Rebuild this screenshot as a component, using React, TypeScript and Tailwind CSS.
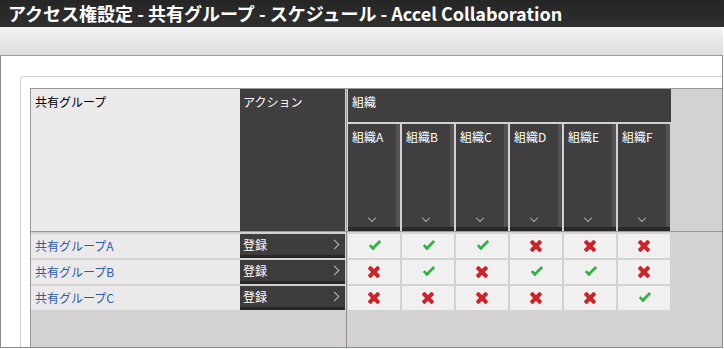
import React from 'react'

const orgs = ['組織A', '組織B', '組織C', '組織D', '組織E', '組織F']

const groups = [
  { name: '共有グループA', perms: [1, 1, 1, 0, 0, 0] },
  { name: '共有グループB', perms: [0, 1, 0, 1, 1, 0] },
  { name: '共有グループC', perms: [0, 0, 0, 0, 0, 1] },
]

// css-drawn icons (no svg)
function CheckIcon() {
  return <div className="w-[6px] h-[12px] -mt-[4px] ml-[2px] border-r-[3px] border-b-[3px] border-[#33b143] rounded-br-[1px] rotate-45" />
}

function CrossIcon() {
  return (
    <div className="grid place-items-center">
      <div className="col-start-1 row-start-1 w-[14px] h-[4px] rounded-[1px] bg-[#c8262c] rotate-45" />
      <div className="col-start-1 row-start-1 w-[14px] h-[4px] rounded-[1px] bg-[#c8262c] -rotate-45" />
    </div>
  )
}

function ChevronDown() {
  return <div className="w-[6px] h-[6px] border-r-[1.5px] border-b-[1.5px] border-[#a9a9a9] rotate-45" />
}

function ChevronRight() {
  return <div className="w-[7px] h-[7px] border-r-[1.5px] border-t-[1.5px] border-[#bdbdbd] rotate-45" />
}

export default function App() {
  return (
    <div className="w-[724px] h-[349px] bg-white overflow-hidden flex flex-col font-['Noto_Sans_CJK_JP','Noto_Sans',sans-serif]">
      <div className="h-[27px] shrink-0 bg-gradient-to-b from-[#262626] to-[#2f2f2f] pl-[8px] text-white font-bold text-[18px] leading-[27px] whitespace-nowrap">
        アクセス権設定 - 共有グループ - スケジュール - Accel Collaboration
      </div>
      <div className="h-[29px] shrink-0 w-[723px] bg-gradient-to-b from-[#f4f4f4] to-[#dcdcdc] border-b border-[#9a9a9a]" />
      <div className="flex-1 min-h-0 w-[723px] mb-px border-x border-b border-[#8c8c8c] pt-[20px] pl-[19px] flex flex-col">
        <div className="flex-1 flex flex-col border-t border-l border-[#d0d0d0] rounded-tl-[4px] pt-[11px] pl-[9px]">
          <div className="flex-1 flex flex-col border-t border-l border-[#999] bg-[#d3d1d2] text-[12px]">
            {/* header */}
            <div className="h-[143px] shrink-0 flex border-b border-[#999]">
              <div className="w-[209px] shrink-0 bg-[#ebe9ea] pl-[4px] pt-[4px] text-black">共有グループ</div>
              <div className="w-[105px] shrink-0 bg-[#403e3f] pl-[3px] pt-[4px] text-white">アクション</div>
              <div className="w-px shrink-0 bg-[#9d9d9d] mx-px" />
              <div className="shrink-0 flex flex-col">
                <div className="h-[33px] w-[323px] bg-[#403e3f] pl-[4px] pt-[4px] text-white">組織</div>
                <div className="mt-[2px] flex gap-[2px]">
                  {orgs.map((o) => (
                    <div key={o} className="w-[52px] h-[107px] flex flex-col">
                      <div className="flex-1 flex">
                        <div className="w-[48px] bg-[#403e3f] flex flex-col">
                          <div className="pl-[4px] pt-[4px] text-white">{o}</div>
                          <div className="mt-auto mb-[6px] flex justify-center">
                            <ChevronDown />
                          </div>
                        </div>
                        <div className="w-[4px] bg-[#545253]" />
                      </div>
                      <div className="h-[4px] bg-[#2a2929]" />
                    </div>
                  ))}
                </div>
              </div>
              <div className="flex-1 bg-[#d3d1d2]" />
            </div>
            {/* body */}
            <div className="flex-1 flex bg-[#d3d1d2]">
              <div className="shrink-0 flex flex-col gap-[2px] pt-[2px]">
                {groups.map((g) => (
                  <div key={g.name} className="h-[24px] flex">
                    <div className="w-[209px] bg-[#ebe9ea] pl-[4px] flex items-center text-[#2f5ba8]">{g.name}</div>
                    <div className="w-[105px] bg-[#3e3c3d] border-b-[3px] border-[#282728] pl-[3px] pr-[7px] flex items-center justify-between text-white">
                      <span>登録</span>
                      <ChevronRight />
                    </div>
                  </div>
                ))}
              </div>
              <div className="w-px shrink-0 bg-[#8f8f8f] mx-px" />
              <div className="shrink-0 flex flex-col gap-[2px] pt-[2px]">
                {groups.map((g) => (
                  <div key={g.name} className="h-[24px] flex gap-[2px]">
                    {g.perms.map((p, i) => (
                      <div key={i} className="w-[52px] bg-[#f0f0f0] flex items-center justify-center">
                        {p ? <CheckIcon /> : <CrossIcon />}
                      </div>
                    ))}
                  </div>
                ))}
              </div>
              <div className="flex-1 bg-[#d3d1d2]" />
            </div>
          </div>
        </div>
      </div>
    </div>
  )
}
